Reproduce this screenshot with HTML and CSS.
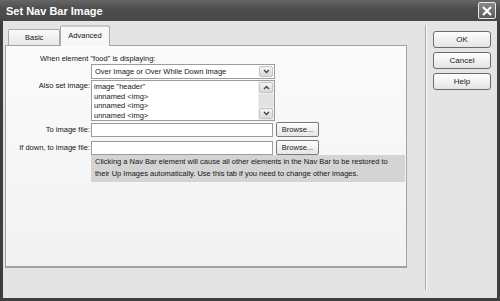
FILE: index.html
```html
<!DOCTYPE html>
<html lang="en">
<head>
    <meta charset="UTF-8">
    <title>Set Nav Bar Image</title>
    <link rel="stylesheet" href="styles.css">
</head>
<body>
    <div class="window">
        <div class="titlebar">
            <span class="title">Set Nav Bar Image</span>
            <span class="close">
                <svg width="12" height="12" viewBox="0 0 12 12">
                    <path d="M2 2 L10 10 M10 2 L2 10" stroke="#fff" stroke-width="2.2"/>
                </svg>
            </span>
        </div>

        <div class="client">
            <div class="main">
                <div class="tabs">
                    <div class="tab">Basic</div>
                    <div class="tab active">Advanced</div>
                </div>

                <div class="panel">
                    <div class="caption">When element "food" is displaying:</div>

                    <div class="row">
                        <span class="label"></span>
                        <div class="select">
                            <span class="select-text">Over Image or Over While Down Image</span>
                            <span class="arrow-btn">
                                <svg width="7" height="5" viewBox="0 0 7 5"><path d="M1 1 L3.5 3.5 L6 1" stroke="#444" stroke-width="1.4" fill="none"/></svg>
                            </span>
                        </div>
                    </div>

                    <div class="row top">
                        <span class="label">Also set image:</span>
                        <div class="listbox">
                            <ul class="items">
                                <li>image "header"</li>
                                <li>unnamed &lt;img&gt;</li>
                                <li>unnamed &lt;img&gt;</li>
                                <li>unnamed &lt;img&gt;</li>
                            </ul>
                            <div class="scrollbar">
                                <span class="arrow-btn">
                                    <svg width="7" height="5" viewBox="0 0 7 5"><path d="M1 4 L3.5 1.5 L6 4" stroke="#444" stroke-width="1.4" fill="none"/></svg>
                                </span>
                                <span class="thumb"></span>
                                <span class="arrow-btn">
                                    <svg width="7" height="5" viewBox="0 0 7 5"><path d="M1 1 L3.5 3.5 L6 1" stroke="#444" stroke-width="1.4" fill="none"/></svg>
                                </span>
                            </div>
                        </div>
                    </div>

                    <div class="row file-row">
                        <span class="label">To image file:</span>
                        <input type="text" class="text-input">
                        <button class="browse">Browse...</button>
                    </div>

                    <div class="row file-row">
                        <span class="label">If down, to image file:</span>
                        <input type="text" class="text-input">
                        <button class="browse">Browse...</button>
                    </div>

                    <div class="row">
                        <span class="label"></span>
                        <div class="info">Clicking a Nav Bar element will cause all other elements in the Nav Bar to be restored to their Up Images automatically. Use this tab if you need to change other images.</div>
                    </div>
                </div>
            </div>

            <div class="side">
                <button class="dlg-btn">OK</button>
                <button class="dlg-btn">Cancel</button>
                <button class="dlg-btn">Help</button>
            </div>
        </div>
    </div>
</body>
</html>
```

FILE: styles.css
```css
body {
    margin: 0;
    padding: 0;
    background-color: #3a3a3a;
    font-family: 'Liberation Sans', Arial, sans-serif;
    font-size: 7.5px;
    color: #151515;
}

.window {
    width: 500px;
    height: 301px;
    box-sizing: border-box;
    border: 3px solid #3e3e3e;
    border-top: none;
    display: flex;
    flex-direction: column;
    background-color: #e4e4e4;
}

.titlebar {
    height: 21px;
    margin: 0 -3px;
    padding: 0 4px 0 6px;
    display: flex;
    align-items: center;
    justify-content: space-between;
    background: linear-gradient(#666, #4e4e4e 40%, #474747);
}

.title {
    color: #fff;
    font-weight: bold;
    font-size: 11px;
}

.close {
    width: 16px;
    height: 15px;
    display: flex;
    align-items: center;
    justify-content: center;
    border: 1px solid #e8e8e8;
    border-radius: 2px;
    background: linear-gradient(#8a8a8a, #5a5a5a);
}

.client {
    flex: 1;
    display: flex;
}

.main {
    width: 402px;
    padding: 4px 0 0 2px;
}

.tabs {
    display: flex;
    align-items: flex-end;
    height: 20px;
    padding-left: 3px;
}

.tab {
    height: 15px;
    line-height: 15px;
    padding: 0 16px;
    border: 1px solid #a9a9a9;
    border-bottom: none;
    border-radius: 2px 2px 0 0;
    background: linear-gradient(#fafafa, #e8e8e8);
    margin-right: 1px;
}

.tab.active {
    height: 19px;
    line-height: 17px;
    padding: 0 7px;
    margin-left: -1px;
    background: #f7f7f7;
    border-top: 2px solid #c8c8c8;
    position: relative;
    top: 1px;
}

.panel {
    height: 223px;
    box-sizing: border-box;
    border: 1px solid #a2a2a2;
    border-bottom-width: 2px;
    background: linear-gradient(#fbfbfb, #f2f2f2);
    padding-top: 7px;
}

.caption {
    padding-left: 34px;
    height: 11px;
    line-height: 11px;
}

.row {
    display: flex;
    align-items: center;
    margin-bottom: 1px;
}

.row.top {
    align-items: flex-start;
    margin-bottom: 0;
}

.label {
    width: 84px;
    flex: none;
    text-align: right;
    padding-right: 1px;
    line-height: 12px;
}

.select {
    width: 184px;
    height: 15px;
    box-sizing: border-box;
    border: 1px solid #9c9c9c;
    background: #fff;
    display: flex;
    align-items: center;
    justify-content: space-between;
    padding: 0 1px 0 3px;
}

.arrow-btn {
    width: 14px;
    height: 11px;
    box-sizing: border-box;
    border: 1px solid #c4c4c4;
    border-radius: 2px;
    background: linear-gradient(#f4f4f4, #d8d8d8);
    display: flex;
    align-items: center;
    justify-content: center;
}

.listbox {
    width: 184px;
    height: 41px;
    box-sizing: border-box;
    border: 1px solid #9c9c9c;
    background: #fff;
    display: flex;
}

.items {
    list-style: none;
    margin: 0;
    padding: 1px 0 0 2px;
    flex: 1;
}

.items li {
    line-height: 9.5px;
}

.scrollbar {
    width: 16px;
    display: flex;
    flex-direction: column;
    justify-content: space-between;
    padding: 1px;
    box-sizing: border-box;
    background: #eeeeee;
}

.scrollbar .arrow-btn {
    width: 14px;
}

.thumb {
    flex: 1;
    margin: 1px 0;
    background: #e2e2e2;
}

.file-row {
    margin-top: 1px;
    margin-bottom: 3px;
}

.text-input {
    width: 182px;
    height: 14px;
    box-sizing: border-box;
    border: 1px solid #9c9c9c;
    background: #fff;
    margin: 0;
    padding: 0;
}

.browse {
    width: 43px;
    height: 15px;
    margin-left: 3px;
    padding: 0;
    font-family: inherit;
    font-size: 7.5px;
    color: #222;
    border: 1px solid #7a7a7a;
    border-radius: 2px;
    background: linear-gradient(#fdfdfd, #e6e6e6);
}

.info {
    width: 306px;
    margin-top: -3px;
    padding: 1px 4px 2px 4px;
    background-color: #d4d4d4;
    line-height: 12px;
}

.side {
    flex: 1;
    display: flex;
    flex-direction: column;
    align-items: flex-end;
    padding: 6px 6px 0 0;
    gap: 4px;
    border-left: 1px solid #a8a8a8;
    margin-left: 18px;
    margin-top: 4px;
    margin-bottom: 8px;
    box-shadow: inset 1px 0 0 #fdfdfd;
}

.dlg-btn {
    width: 58px;
    height: 17px;
    padding: 0;
    font-family: inherit;
    font-size: 8px;
    color: #222;
    border: 1px solid #6a6a6a;
    border-radius: 3px;
    background: linear-gradient(#fefefe, #e4e4e4);
}
```
